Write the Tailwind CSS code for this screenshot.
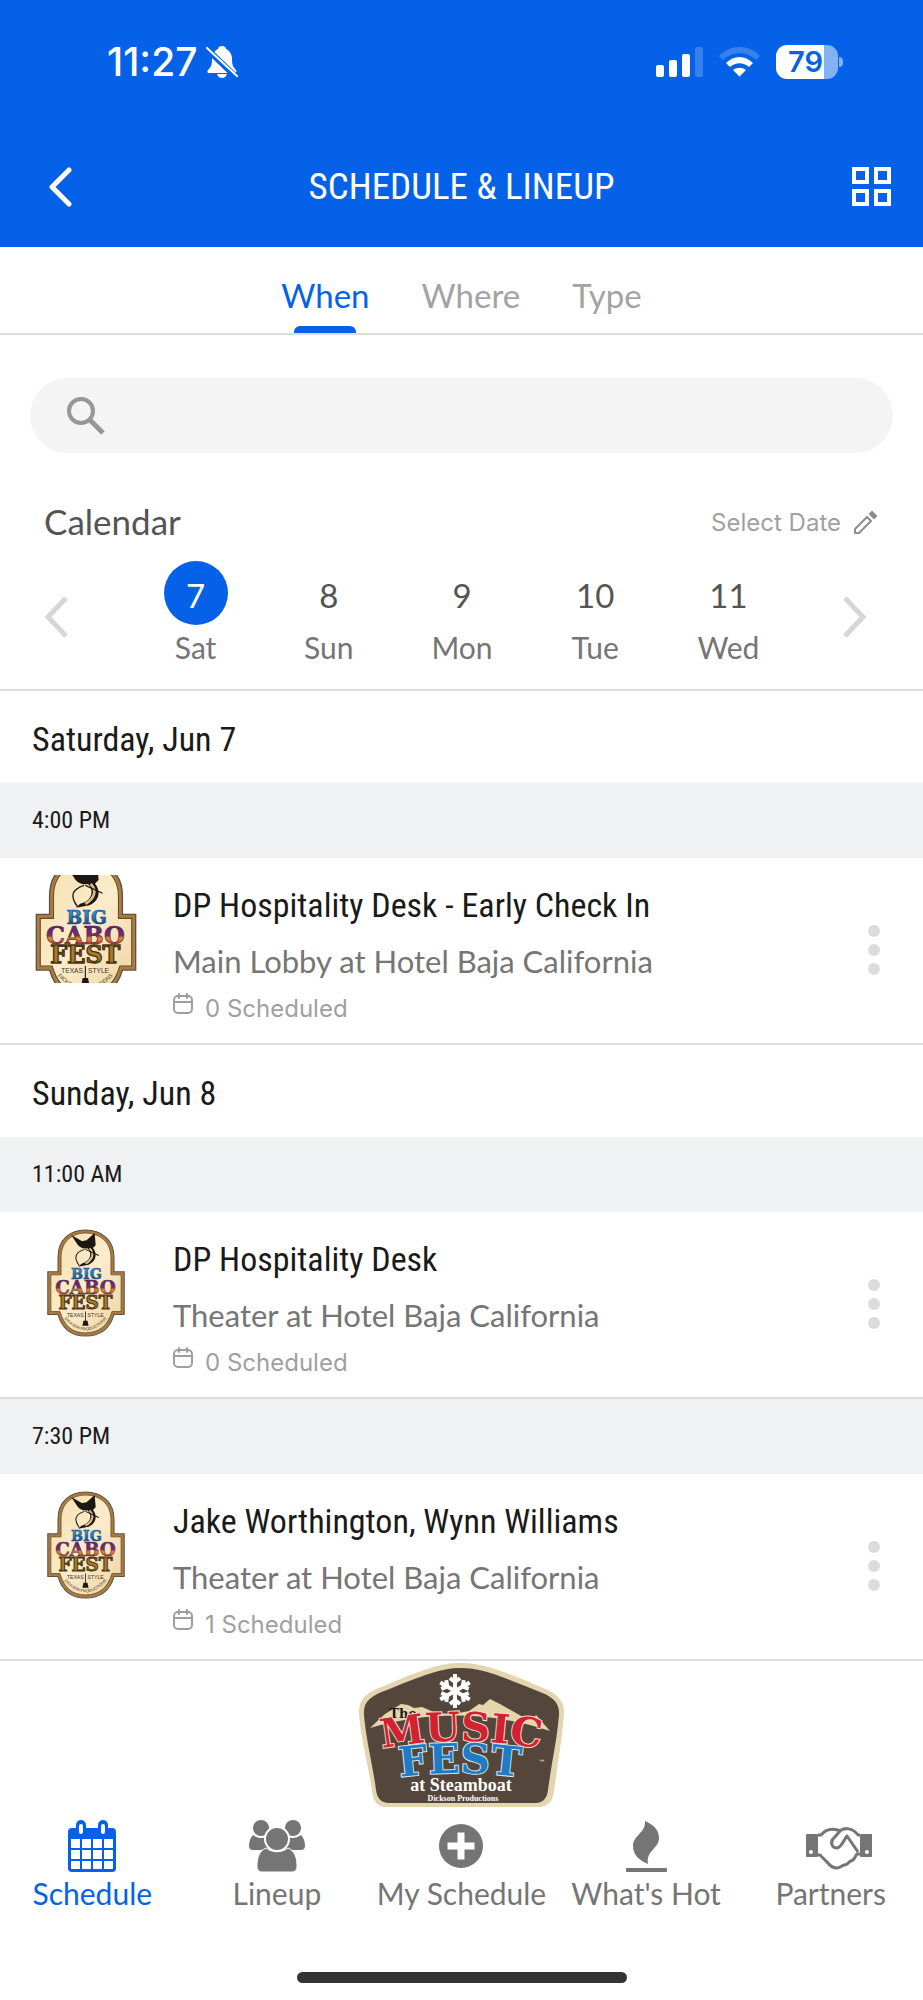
<!DOCTYPE html>
<html lang="en">
  <head>
    <meta charset="UTF-8" />
    <meta name="viewport" content="width=device-width, initial-scale=1.0" />
    <title>Schedule &amp; Lineup</title>
    <script src="https://cdn.jsdelivr.net/npm/@tailwindcss/browser@4"></script>
  </head>
  <body class="min-h-screen bg-white font-['Lato','Open_Sans',sans-serif] text-[#757575]">
    <!-- Shared artwork -->
    <svg class="absolute" width="0" height="0" aria-hidden="true">
      <defs>
        <linearGradient id="cabo-fill" x1="0" y1="0" x2="0" y2="1">
          <stop offset="0.25" stop-color="#5b2a7a" />
          <stop offset="0.5" stop-color="#7d2f5c" />
          <stop offset="0.6" stop-color="#e0962a" />
          <stop offset="0.8" stop-color="#c2302a" />
        </linearGradient>
        <linearGradient id="big-fill" x1="0" y1="0" x2="0" y2="1">
          <stop offset="0.3" stop-color="#2a8fd6" />
          <stop offset="0.8" stop-color="#1c4f8c" />
        </linearGradient>
        <linearGradient id="paper" x1="0" y1="0" x2="1" y2="1">
          <stop offset="0" stop-color="#f6dfae" />
          <stop offset="0.5" stop-color="#fbeccb" />
          <stop offset="1" stop-color="#efd3a0" />
        </linearGradient>
        <g id="cabo-logo">
          <path
            d="M11 42V28C11 10 23 1 38 1s28 9 28 27v14h10v42H66c-4 14-14 21-28 21S15 98 11 84H1V42z"
            fill="#a87c45"
            stroke="#5f5140"
            stroke-width="1"
          />
          <path
            d="M14 45V28C14 12 25 4 38 4s25 8 25 24v17h10v36H64c-4 14-13 21-26 21S17 95 13 81H4V45z"
            fill="url(#paper)"
            stroke="#6b4d26"
            stroke-width="0.8"
          />
          <!-- Marlin -->
          <path d="M34 12l5-1 8-7 1 12-3 3-5-2z" fill="#1d1713" />
          <path d="M24 6l16 9c10 4 11 16 1 20l-10 2 3-3c9-2 11-10 6-15-4 1-8-1-10-4z" fill="#1d1713" />
          <path d="M42 19c5 5 3 11-4 15" fill="none" stroke="#d9bd8a" stroke-width="2" />
          <path
            d="M38 20l13 6M37 20c-9 3-11 8-5 16"
            fill="none"
            stroke="#1d1713"
            stroke-width="1"
          />
          <g
            font-family="'DejaVu Serif', serif"
            font-weight="bold"
            text-anchor="middle"
          >
            <text x="39" y="49" font-size="14" fill="url(#big-fill)" stroke="#1f4a78" stroke-width="0.5">BIG</text>
            <text x="38" y="64" font-size="18" fill="url(#cabo-fill)" stroke="#54243d" stroke-width="0.5">CABO</text>
            <text x="38" y="79" font-size="18" fill="#a57b2c" stroke="#4b3514" stroke-width="1">FEST</text>
          </g>
          <g
            font-family="'Liberation Sans', sans-serif"
            font-size="5"
            fill="#40301c"
            text-anchor="middle"
          >
            <text x="28" y="86">TEXAS</text>
            <text x="48" y="86">STYLE</text>
          </g>
          <path d="M38 81v12" stroke="#1d1713" stroke-width="0.8" />
          <path d="M36 90h4l1 5h-6z" fill="#1d1713" />
          <path id="cabo-arc" d="M17 88q21 23 42 0" fill="none" />
          <text
            font-family="'Liberation Sans', sans-serif"
            font-size="4"
            fill="#40301c"
            text-anchor="middle"
          >
            <textPath href="#cabo-arc" startOffset="50%">DICKSON PRODUCTIONS</textPath>
          </text>
        </g>
        <g
          id="mini-calendar"
          fill="none"
          stroke="#9e9e9e"
          stroke-width="2"
          stroke-linecap="round"
        >
          <rect x="1" y="3" width="18" height="17" rx="4" />
          <path d="M1 9h18M6 1v4M14 1v4" />
        </g>
        <g id="more-dots" fill="#dcdcdc">
          <circle cx="6" cy="6" r="6" />
          <circle cx="6" cy="25" r="6" />
          <circle cx="6" cy="44" r="6" />
        </g>
      </defs>
    </svg>

    <header class="bg-[#0562e8] text-white">
      <!-- Status bar -->
      <div class="flex h-[124px] items-center justify-between pr-20 pl-[107px]">
        <div class="flex items-center gap-2">
          <span class="font-['Inter',sans-serif] text-[39px] leading-10 font-medium">11:27</span>
          <svg class="h-8 w-8" viewBox="0 0 32 32" fill="currentColor" aria-label="Silent">
            <path d="M16 0c2 0 4 1 4 3 4 2 6 6 6 10 0 6 1 8 4 11 1 1 0 3-1 3H3c-2 0-2-2-1-3 3-3 4-5 4-11 0-4 2-8 6-10 0-2 2-3 4-3z" />
            <path d="M11 28h10c-1 3-3 4-5 4s-4-1-5-4z" />
            <path d="M-1 1l32 31" stroke="#0562e8" stroke-width="6" />
            <path d="M1 2l30 28" stroke="currentColor" stroke-width="2" stroke-linecap="round" />
          </svg>
        </div>
        <div class="flex items-center gap-4">
          <svg class="h-[30px] w-[47px]" viewBox="0 0 47 30" fill="currentColor" aria-label="Signal">
            <rect y="18" width="8" height="12" rx="2" />
            <rect x="13" y="13" width="8" height="17" rx="2" />
            <rect x="26" y="7" width="8" height="23" rx="2" />
            <rect x="39" width="8" height="30" rx="2" opacity="0.2" />
          </svg>
          <svg class="h-[30px] w-[41px]" viewBox="0 0 41 30" fill="currentColor" aria-label="Wi-Fi">
            <path d="M0 9C11-3 30-3 41 9l-4 4C28 4 13 4 4 13z" opacity="0.2" />
            <path d="M7 16c8-8 19-8 27 0l-4 4c-6-5-13-5-19 0z" />
            <path d="M14 23c4-3 9-3 13 0l-6 6q-1 1-1 0z" />
          </svg>
          <div class="flex items-center gap-px">
            <div
              class="h-[34px] w-[62px] rounded-[11px] bg-linear-to-r from-white from-78% to-white/50 to-78% pl-3 font-['Inter',sans-serif] text-[29px] leading-[34px] font-semibold text-[#0562e8]"
            >
              79
            </div>
            <div class="h-[10px] w-1 rounded-r-full bg-white/50"></div>
          </div>
        </div>
      </div>
      <!-- Title bar -->
      <div class="flex h-[123px] items-start justify-between px-8 pt-[43px]">
        <button type="button" aria-label="Back" class="pl-4">
          <svg class="h-10 w-[39px]" viewBox="0 0 39 40" fill="none" stroke="currentColor" stroke-width="5" stroke-linecap="round" stroke-linejoin="round">
            <path d="M21 3L4 20l17 17" />
          </svg>
        </button>
        <h1 class="font-['Roboto_Condensed','Liberation_Sans_Narrow',sans-serif] text-[37px] leading-10">
          SCHEDULE &amp; LINEUP
        </h1>
        <button type="button" aria-label="Menu" class="pl-4">
          <svg class="h-10 w-[39px]" viewBox="0 0 39 40" fill="none" stroke="currentColor" stroke-width="4">
            <path d="M2 2h13v13H2zM24 2h13v13H24zM2 24h13v13H2zM24 24h13v13H24z" />
          </svg>
        </button>
      </div>
    </header>

    <main>
      <nav class="flex justify-center gap-[52px] border-b-2 border-[#dddddd] text-[33px] leading-10">
        <a href="#when" class="flex flex-col items-center gap-[11px] pt-7 text-[#0562e8]">
          When
          <span class="h-[7px] w-[62px] rounded-t-md bg-[#0562e8]"></span>
        </a>
        <a href="#where" class="pt-7 text-[#a3a3a3]">Where</a>
        <a href="#type" class="pt-7 text-[#a3a3a3]">Type</a>
      </nav>

      <label class="mx-[30px] mt-[43px] flex h-[75px] items-center rounded-full bg-[#f4f4f4] pr-8 pl-[37px]">
        <svg class="h-[38px] w-[38px] shrink-0" viewBox="0 0 38 38" fill="none" stroke="#979797" stroke-width="4" aria-hidden="true">
          <circle cx="14" cy="14" r="12" />
          <path d="M23 23l13 13" stroke-width="5" />
        </svg>
        <input type="search" aria-label="Search" class="ml-4 w-full bg-transparent text-[30px] outline-none" />
      </label>

      <section class="border-b-2 border-[#dddddd]">
        <div class="flex items-center justify-between pt-12 pr-[46px] pl-11">
          <h2 class="text-[35px] leading-10 text-[#545454]">Calendar</h2>
          <button type="button" class="flex items-center gap-3 pt-1 font-['Inter',sans-serif] text-[24px] leading-8 text-[#a0a0a0]">
            Select Date
            <svg class="h-6 w-6" viewBox="0 0 24 24" fill="none" stroke="#8c8c8c" stroke-width="2" stroke-linejoin="round">
              <path d="M2 18L14 6l4 4L6 22H2z" />
              <path d="M17 3l2-2 4 4-2 2z" fill="#8c8c8c" />
            </svg>
          </button>
        </div>
        <div class="flex items-start pt-5 pr-14 pb-6 pl-11">
          <button type="button" aria-label="Previous days" class="pt-[35px]">
            <svg class="h-[42px] w-6" viewBox="0 0 24 42" fill="none" stroke="#d6d6d6" stroke-width="5">
              <path d="M22 2L4 21l18 19" />
            </svg>
          </button>
          <div class="grid flex-1 grid-cols-5 pr-12 pl-[61px] text-[30px]">
            <button type="button" class="flex flex-col items-center">
              <span class="h-16 w-16 rounded-full bg-[#0562e8] pt-1 text-[33px] leading-[60px] text-white">7</span>
              <span class="mt-1 leading-9">Sat</span>
            </button>
            <button type="button" class="flex flex-col items-center">
              <span class="h-16 w-16 pt-1 text-[33px] leading-[60px] text-[#545454]">8</span>
              <span class="mt-1 leading-9">Sun</span>
            </button>
            <button type="button" class="flex flex-col items-center">
              <span class="h-16 w-16 pt-1 text-[33px] leading-[60px] text-[#545454]">9</span>
              <span class="mt-1 leading-9">Mon</span>
            </button>
            <button type="button" class="flex flex-col items-center">
              <span class="h-16 w-16 pt-1 text-[33px] leading-[60px] text-[#545454]">10</span>
              <span class="mt-1 leading-9">Tue</span>
            </button>
            <button type="button" class="flex flex-col items-center">
              <span class="h-16 w-16 pt-1 text-[33px] leading-[60px] text-[#545454]">11</span>
              <span class="mt-1 leading-9">Wed</span>
            </button>
          </div>
          <button type="button" aria-label="Next days" class="pt-[35px]">
            <svg class="h-[42px] w-6" viewBox="0 0 24 42" fill="none" stroke="#d6d6d6" stroke-width="5">
              <path d="M2 2l18 19L2 40" />
            </svg>
          </button>
        </div>
      </section>

      <!-- Saturday -->
      <section class="font-['Roboto_Condensed','Liberation_Sans_Narrow',sans-serif] text-[#1a1a1a]">
        <h2 class="px-8 pt-7 pb-6 text-[34px] leading-10">Saturday, Jun 7</h2>
        <h3 class="bg-[#f0f1f3] px-8 text-[24px] leading-[75px]">4:00 PM</h3>
        <article class="flex border-b-2 border-[#dddddd] pt-[17px] pr-[43px] pb-[18px] pl-[35px]">
          <svg class="h-[108px] w-[102px] shrink-0" viewBox="0 0 77 106" preserveAspectRatio="xMidYMid slice" aria-label="Big Cabo Fest">
            <use href="#cabo-logo" />
          </svg>
          <div class="ml-9 flex-1">
            <h4 class="pt-2 text-[34px] leading-11">DP Hospitality Desk - Early Check In</h4>
            <p class="mt-4 font-['Lato',sans-serif] text-[31px] leading-9 text-[#757575]">Main Lobby at Hotel Baja California</p>
            <p class="mt-3.5 flex items-start gap-3 font-['Inter',sans-serif] text-[24px] leading-8 text-[#a0a0a0]">
              <svg class="h-[21px] w-5" viewBox="0 0 20 21" aria-hidden="true"><use href="#mini-calendar" /></svg>
              0 Scheduled
            </p>
          </div>
          <button type="button" aria-label="More options" class="self-center">
            <svg class="h-[50px] w-3" viewBox="0 0 12 50"><use href="#more-dots" /></svg>
          </button>
        </article>
      </section>

      <!-- Sunday -->
      <section class="font-['Roboto_Condensed','Liberation_Sans_Narrow',sans-serif] text-[#1a1a1a]">
        <h2 class="px-8 pt-7 pb-6 text-[34px] leading-10">Sunday, Jun 8</h2>
        <h3 class="bg-[#f0f1f3] px-8 text-[24px] leading-[75px]">11:00 AM</h3>
        <article class="flex border-b-2 border-[#dddddd] pt-[17px] pr-[43px] pb-[18px] pl-[35px]">
          <svg class="h-[108px] w-[102px] shrink-0" viewBox="0 0 77 106" aria-label="Big Cabo Fest">
            <use href="#cabo-logo" />
          </svg>
          <div class="ml-9 flex-1">
            <h4 class="pt-2 text-[34px] leading-11">DP Hospitality Desk</h4>
            <p class="mt-4 font-['Lato',sans-serif] text-[31px] leading-9 text-[#757575]">Theater at Hotel Baja California</p>
            <p class="mt-3.5 flex items-start gap-3 font-['Inter',sans-serif] text-[24px] leading-8 text-[#a0a0a0]">
              <svg class="h-[21px] w-5" viewBox="0 0 20 21" aria-hidden="true"><use href="#mini-calendar" /></svg>
              0 Scheduled
            </p>
          </div>
          <button type="button" aria-label="More options" class="self-center">
            <svg class="h-[50px] w-3" viewBox="0 0 12 50"><use href="#more-dots" /></svg>
          </button>
        </article>
        <h3 class="bg-[#f0f1f3] px-8 text-[24px] leading-[75px]">7:30 PM</h3>
        <article class="flex border-b-2 border-[#dddddd] pt-[17px] pr-[43px] pb-[18px] pl-[35px]">
          <svg class="h-[108px] w-[102px] shrink-0" viewBox="0 0 77 106" aria-label="Big Cabo Fest">
            <use href="#cabo-logo" />
          </svg>
          <div class="ml-9 flex-1">
            <h4 class="pt-2 text-[34px] leading-11">Jake Worthington, Wynn Williams</h4>
            <p class="mt-4 font-['Lato',sans-serif] text-[31px] leading-9 text-[#757575]">Theater at Hotel Baja California</p>
            <p class="mt-3.5 flex items-start gap-3 font-['Inter',sans-serif] text-[24px] leading-8 text-[#a0a0a0]">
              <svg class="h-[21px] w-5" viewBox="0 0 20 21" aria-hidden="true"><use href="#mini-calendar" /></svg>
              1 Scheduled
            </p>
          </div>
          <button type="button" aria-label="More options" class="self-center">
            <svg class="h-[50px] w-3" viewBox="0 0 12 50"><use href="#more-dots" /></svg>
          </button>
        </article>
      </section>
    </main>

    <!-- Sponsor banner -->
    <a href="#musicfest" class="flex justify-center pt-[2px]">
      <svg class="h-36 w-[207px]" viewBox="0 0 207 144" aria-label="The MusicFest at Steamboat">
        <path
          d="M103 0c22 0 42 8 77 23 18 6 27 14 26 28-2 26-7 54-10 77-1 10-6 16-16 16H29c-10 0-14-6-15-16C11 105 3 77 1 51 0 37 8 29 26 23 61 8 81 0 103 0z"
          fill="#e3d5b0"
        />
        <path
          d="M103 5c20 0 40 8 74 22 17 6 25 12 24 25-2 25-8 51-11 75-1 8-5 13-12 13H31c-8 0-12-5-13-13C15 103 8 77 6 52 5 39 12 33 29 27 63 13 83 5 103 5z"
          fill="#54463b"
        />
        <path
          d="M12 65l15-14 16-10 7 1 6 3 8-1 14 6 17 1 16-3 10-7 4 1 7-6 10 5 16 9 10 6 6 1 4-5 14 16c-60-20-122-20-180-3z"
          fill="#e6d6ab"
        />
        <g fill="none" stroke="#fff" stroke-width="4">
          <g id="flake-arm">
            <path d="M97 28V11M92 15l5 4 5-4" />
          </g>
          <use href="#flake-arm" transform="rotate(60 97 28)" />
          <use href="#flake-arm" transform="rotate(120 97 28)" />
          <use href="#flake-arm" transform="rotate(180 97 28)" />
          <use href="#flake-arm" transform="rotate(240 97 28)" />
          <use href="#flake-arm" transform="rotate(300 97 28)" />
        </g>
        <path id="music-arc" d="M8 89q95 -22 190 0" fill="none" />
        <path id="fest-arc" d="M18 118q84 -16 168 0" fill="none" />
        <g
          font-family="'DejaVu Serif', serif"
          font-weight="bold"
          text-anchor="middle"
          paint-order="stroke"
        >
          <text x="45" y="55" font-size="13" fill="#1e1915">The</text>
          <text font-size="40" fill="#d3222f" stroke="#f3d9cf" stroke-width="2">
            <textPath href="#music-arc" startOffset="50%">MUSIC</textPath>
          </text>
          <text font-size="41" fill="#1f7cc4" stroke="#d5e4ec" stroke-width="2">
            <textPath href="#fest-arc" startOffset="50%">FEST</textPath>
          </text>
          <text x="184" y="101" font-size="6" fill="#fff">™</text>
        </g>
        <g font-family="'Liberation Serif', serif" font-weight="bold" text-anchor="middle" fill="#fff">
          <text x="103" y="128" font-size="18">at Steamboat</text>
          <text x="105" y="138" font-size="8">Dickson Productions</text>
        </g>
      </svg>
    </a>

    <!-- Bottom tabs -->
    <nav class="grid grid-cols-5 pt-3 text-[30px] leading-9 whitespace-nowrap">
      <a href="#schedule" class="flex flex-col items-center gap-0.5 text-[#0562e8]">
        <svg class="h-[54px] w-12" viewBox="0 0 48 54" aria-hidden="true">
          <rect y="9" width="48" height="44" rx="4" fill="currentColor" />
          <rect x="8" y="1" width="10" height="16" rx="5" fill="currentColor" />
          <rect x="30" y="1" width="10" height="16" rx="5" fill="currentColor" />
          <rect x="11" y="5" width="4" height="10" rx="2" fill="#fff" />
          <rect x="33" y="5" width="4" height="10" rx="2" fill="#fff" />
          <path
            d="M3 20h9v9H3zM14 20h9v9h-9zM25 20h9v9h-9zM36 20h9v9h-9zM3 31h9v9H3zM14 31h9v9h-9zM25 31h9v9h-9zM36 31h9v9h-9zM3 42h9v8H3zM14 42h9v8h-9zM25 42h9v8h-9zM36 42h9v8h-9z"
            fill="#fff"
          />
        </svg>
        Schedule
      </a>
      <a href="#lineup" class="flex flex-col items-center gap-0.5">
        <svg class="h-[54px] w-14" viewBox="0 0 56 54" fill="currentColor" aria-hidden="true">
          <circle cx="12" cy="9" r="8" />
          <circle cx="44" cy="9" r="8" />
          <path d="M4 16c4 3 9 4 14 2-2 6 0 10 3 12-5 0-5 0-9 1H4c-3 0-4-2-4-4 0-4 1-8 4-11zM52 16c-4 3-9 4-14 2 2 6 0 10-3 12 5 0 5 0 9 1h8c3 0 4-2 4-4 0-4-1-8-4-11z" />
          <path d="M17 29c7 5 15 5 22 0 7 3 9 10 9 18 0 4-2 6-6 6H14c-4 0-6-2-6-6 0-8 2-15 9-18z" stroke="#fff" stroke-width="1" />
          <circle cx="28" cy="20" r="12" stroke="#fff" stroke-width="2" />
        </svg>
        Lineup
      </a>
      <a href="#my-schedule" class="flex flex-col items-center gap-0.5">
        <svg class="h-[54px] w-11" viewBox="0 0 44 54" aria-hidden="true">
          <circle cx="22" cy="27" r="22" fill="currentColor" />
          <path d="M22 17v20M12 27h20" stroke="#fff" stroke-width="7" stroke-linecap="square" />
        </svg>
        My Schedule
      </a>
      <a href="#whats-hot" class="flex flex-col items-center gap-0.5">
        <svg class="h-[54px] w-[41px]" viewBox="0 0 41 54" fill="currentColor" aria-hidden="true">
          <path d="M19 2c9 4 14 9 14 17 0 11-13 12-11 26C13 41 7 36 7 27 7 16 20 14 19 2z" />
          <rect y="49" width="41" height="4" rx="1" />
        </svg>
        What's Hot
      </a>
      <a href="#partners" class="flex flex-col items-center gap-0.5">
        <svg class="ml-4 h-[54px] w-[66px]" viewBox="0 0 66 54" aria-hidden="true">
          <path d="M1 16h10v21H1zM55 16h10v21H55z" fill="currentColor" stroke="currentColor" stroke-width="2" stroke-linejoin="round" />
          <circle cx="5" cy="33" r="2" fill="#fff" />
          <circle cx="61" cy="33" r="2" fill="#fff" />
          <path
            d="M12 16h3c5-6 12-7 20-4M12 36h2l7 7c3 4 6 6 10 6 3 0 4-2 7-3 4 0 4-3 7-4 4-1 4-5 6-7h3M54 16h-2c-5-7-14-8-18-4l-7 8c-3 4-1 9 4 9 5-1 6-7 10-12l11 16"
            fill="none"
            stroke="currentColor"
            stroke-width="3"
            stroke-linejoin="round"
          />
        </svg>
        Partners
      </a>
    </nav>
    <div class="mx-auto mt-[61px] mb-[17px] h-[11px] w-[330px] rounded-full bg-[#333333]"></div>
  </body>
</html>
